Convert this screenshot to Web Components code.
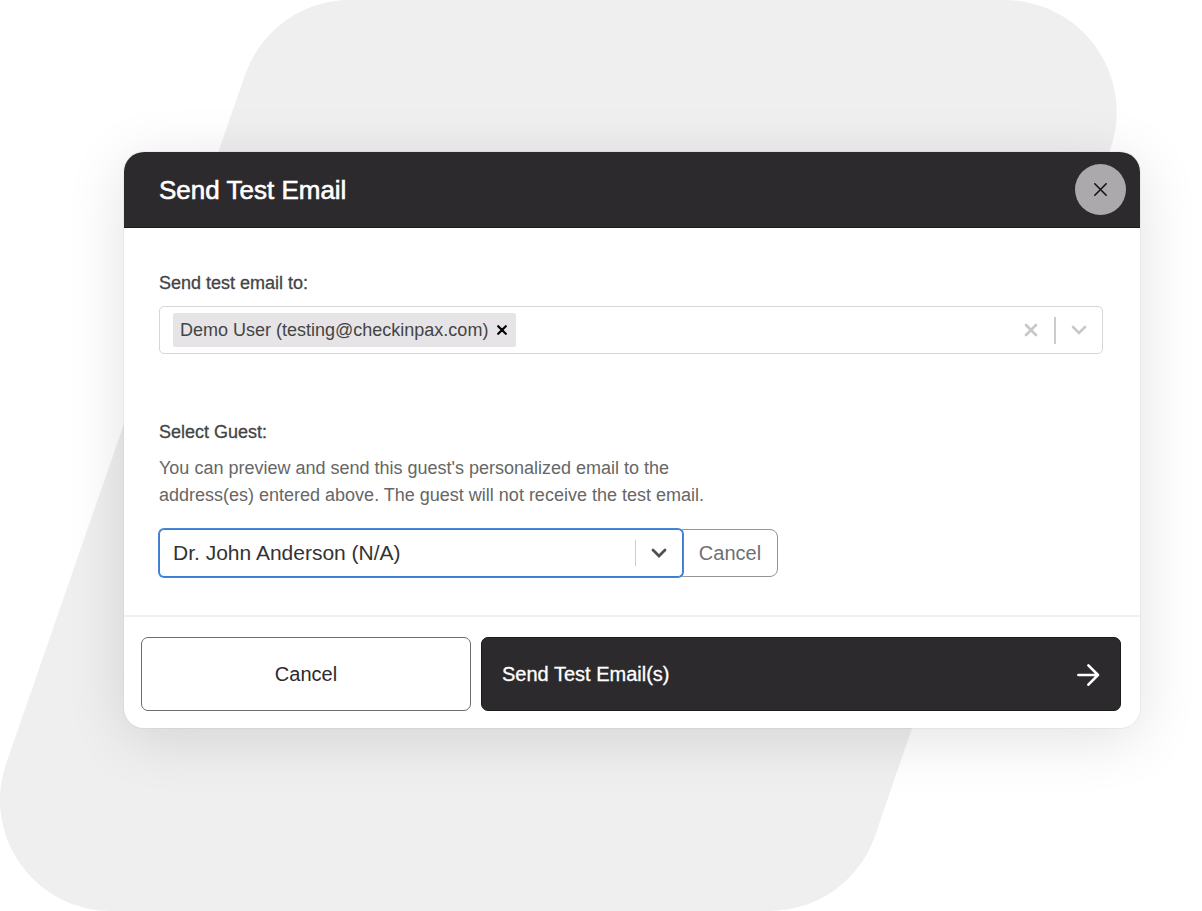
<!DOCTYPE html>
<html lang="en">
<head>
<meta charset="utf-8">
<meta name="viewport" content="width=device-width, initial-scale=1">
<title>Send Test Email</title>
<style>
  body { margin: 0; background: #fff; font-family: "Liberation Sans", Arial, sans-serif; }
</style>
</head>
<body>
<page-stage>
  <modal-card>
    <span slot="title">Send Test Email</span>
    <recipient-field></recipient-field>
    <guest-field></guest-field>
    <modal-actions slot="footer"></modal-actions>
  </modal-card>
</page-stage>

<script>
  const define = (name, html) => {
    const template = document.createElement('template');
    template.innerHTML = '<style>*, *::before, *::after { box-sizing: border-box; } button, input, select { font: inherit; } button { cursor: pointer; } svg { display: block; }</style>' + html;
    customElements.define(name, class extends HTMLElement {
      constructor() {
        super();
        this.attachShadow({ mode: 'open' }).append(template.content.cloneNode(true));
      }
    });
  };

  // Page area with the slanted grey shape behind its content
  define('page-stage', `
    <style>
      :host { display: block; position: relative; box-sizing: border-box; min-height: 100vh; padding: 152px 62px 152px 124px; overflow: hidden; }
      .shape { position: absolute; top: 0; left: 0; width: 100%; }
      .content { position: relative; }
    </style>
    <svg class="shape" viewBox="0 0 1202 911" aria-hidden="true">
      <path fill="#efefef" d="M350 0H1005A112 112 0 0 1 1111 147L875 836A112 112 0 0 1 770 911H111A111 111 0 0 1 6 764L245 75A111 111 0 0 1 350 0Z"/>
    </svg>
    <div class="content"><slot></slot></div>
  `);

  define('modal-card', `
    <style>
      :host { display: block; border-radius: 20px; background: #fff; box-shadow: 0 0 0 1px rgba(90, 60, 90, .05), 0 10px 60px rgba(0, 0, 0, .12); }
      header { display: flex; align-items: center; justify-content: space-between; height: 76px; padding: 0 14px 0 35px; background: #2c2a2d; border-bottom: 1px solid #1c1a1d; border-radius: 20px 20px 0 0; }
      h1 { margin: 0; font-size: 26px; line-height: 32px; font-weight: 400; color: #fff; -webkit-text-stroke: .6px #fff; }
      .close { display: grid; place-items: center; width: 51px; height: 51px; padding: 0; border: 0; border-radius: 50%; background: #aba9ac; color: #151316; }
      .body { padding: 43px 37px 38px 35px; display: grid; gap: 66px; }
      footer { border-top: 2px solid #f0f0f0; padding: 20px 19px 17px 17px; }
    </style>
    <section role="dialog" aria-labelledby="title">
      <header>
        <h1 id="title"><slot name="title"></slot></h1>
        <button class="close" type="button" aria-label="Close">
          <svg width="15" height="15" viewBox="0 0 15 15" fill="none" stroke="currentColor" stroke-width="1.6" stroke-linecap="round"><path d="M1.8 1.8l11.4 11.4M13.2 1.8L1.8 13.2"/></svg>
        </button>
      </header>
      <div class="body"><slot></slot></div>
      <footer><slot name="footer"></slot></footer>
    </section>
  `);

  define('recipient-field', `
    <style>
      :host { display: block; color: #444; font-size: 18px; line-height: 24px; }
      label { display: block; -webkit-text-stroke: .3px currentColor; }
      .control { display: flex; align-items: center; height: 48px; margin-top: 11px; padding: 0 13px; border: 1px solid #d6d6d6; border-radius: 5px; background: #fff; }
      .chip { display: flex; align-items: center; height: 34px; padding-left: 7px; border-radius: 2px; background: #e6e4e6; white-space: nowrap; }
      button { display: grid; place-items: center; padding: 0; border: 0; background: none; color: #c8c8c8; }
      .chip button { width: 28px; height: 34px; color: #000; }
      input { flex: 1; min-width: 0; height: 34px; border: 0; outline: 0; background: none; }
      .clear, .open { width: 20px; height: 28px; }
      .divider { width: 2px; height: 27px; margin: 0 13px; background: #ccc; }
    </style>
    <label for="to">Send test email to:</label>
    <div class="control">
      <span class="chip">Demo User (testing@checkinpax.com)
        <button type="button" aria-label="Remove Demo User">
          <svg width="10" height="10" viewBox="0 0 10 10" fill="none" stroke="currentColor" stroke-width="2.2" stroke-linecap="round"><path d="M1.2 1.2l7.6 7.6M8.8 1.2L1.2 8.8"/></svg>
        </button>
      </span>
      <input id="to" type="text" autocomplete="off">
      <button class="clear" type="button" aria-label="Clear all">
        <svg width="14" height="14" viewBox="0 0 14 14" fill="none" stroke="currentColor" stroke-width="2.6" stroke-linecap="round"><path d="M2 2l10 10M12 2L2 12"/></svg>
      </button>
      <span class="divider"></span>
      <button class="open" type="button" aria-label="Show options">
        <svg width="16" height="10" viewBox="0 0 16 10" fill="none" stroke="currentColor" stroke-width="2.6" stroke-linecap="round"><path d="M2 2l6 6 6-6"/></svg>
      </button>
    </div>
  `);

  define('guest-field', `
    <style>
      :host { display: block; color: #666; font-size: 18px; }
      label { display: block; line-height: 24px; color: #444; -webkit-text-stroke: .3px currentColor; }
      p { max-width: 570px; margin: 11px 0 20px; line-height: 27px; }
      .group { display: flex; max-width: 619px; height: 48px; }
      .select { position: relative; flex: 1; min-width: 0; z-index: 1; }
      select { display: block; width: 100%; height: 100%; padding: 0 60px 2px 13px; appearance: none; border: 1px solid #3b7bd0; border-radius: 5px; outline: 0; box-shadow: 0 0 0 1px #4a87d8; background: #fff; color: #333; font-size: 21px; }
      .marks { position: absolute; top: 0; right: 16px; height: 100%; display: flex; align-items: center; gap: 15px; pointer-events: none; color: #505050; }
      .divider { width: 1px; height: 26px; background: #ccc; }
      .cancel { width: 96px; margin-left: -1px; padding: 0; border: 1px solid #949494; border-radius: 0 8px 8px 0; background: #fff; color: #707070; font-size: 20px; }
    </style>
    <label for="guest">Select Guest:</label>
    <p id="hint">You can preview and send this guest's personalized email to the address(es) entered above. The guest will not receive the test email.</p>
    <div class="group">
      <div class="select">
        <select id="guest" aria-describedby="hint"><option>Dr. John Anderson (N/A)</option></select>
        <span class="marks"><span class="divider"></span>
          <svg width="16" height="10" viewBox="0 0 16 10" fill="none" stroke="currentColor" stroke-width="2.8" stroke-linecap="round"><path d="M2 2l6 6 6-6"/></svg>
        </span>
      </div>
      <button class="cancel" type="button">Cancel</button>
    </div>
  `);

  define('modal-actions', `
    <style>
      :host { display: grid; grid-template-columns: 33fr 64fr; gap: 10px; font-size: 20px; }
      button { height: 74px; border-radius: 7px; }
      .cancel { padding: 0; border: 1px solid #6c6c6c; background: #fff; color: #2c2a2d; }
      .send { display: flex; align-items: center; justify-content: space-between; padding: 0 20px; border: 1px solid #1c1a1d; background: #2c2a2d; color: #fff; }
      .send span { -webkit-text-stroke: .3px currentColor; }
    </style>
    <button class="cancel" type="button">Cancel</button>
    <button class="send" type="button">
      <span>Send Test Email(s)</span>
      <svg width="24" height="24" viewBox="0 0 24 24" fill="none" stroke="currentColor" stroke-width="2.6" stroke-linecap="round" stroke-linejoin="round"><path d="M2.4 13H22M12.4 3.3L22 13l-9.6 9.7"/></svg>
    </button>
  `);
</script>
</body>
</html>
